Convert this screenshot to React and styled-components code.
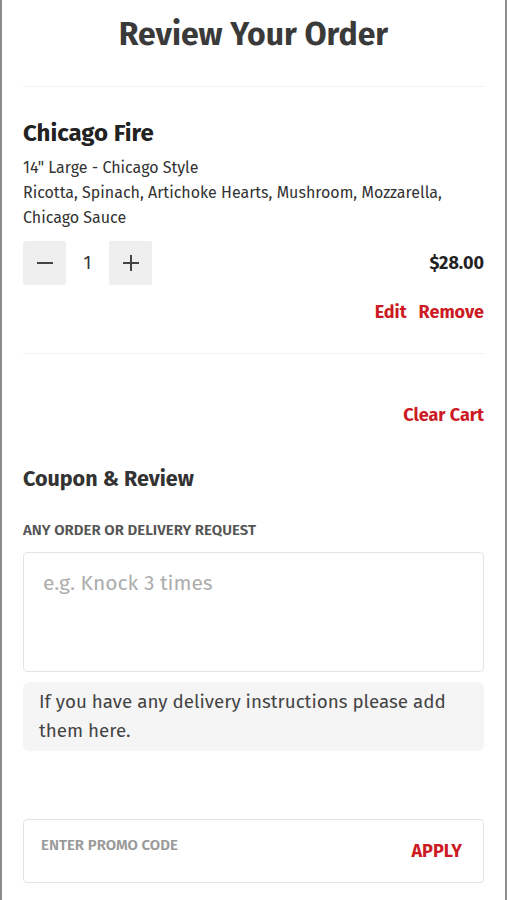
import React from "react";
import styled, { createGlobalStyle } from "styled-components";

const Global = createGlobalStyle`
  html, body { margin: 0; padding: 0; background: #fff; }
  body { font-family: "Fira Sans", "Open Sans", "Noto Sans", sans-serif; color: #333; }
  * { box-sizing: border-box; }
`;

const RED = "#cc1b24";

const Page = styled.div`
  min-height: 900px;
  border-left: 2px solid #8c8c8c;
  border-right: 2px solid #8c8c8c;
  padding: 0 21px 20px;
`;

const Title = styled.h1`
  margin: 0;
  padding-top: 14px;
  height: 87px;
  text-align: center;
  font-size: 32px;
  line-height: 40px;
  font-weight: 700;
  color: #3a3a3a;
  border-bottom: 1px solid #f2f2f2;
`;

const Item = styled.section`
  padding-top: 30px;
  height: 267px;
  border-bottom: 1px solid #f2f2f2;
`;

const ItemName = styled.h2`
  margin: 0 0 6px;
  font-size: 24px;
  line-height: 32px;
  font-weight: 700;
  color: #222;
`;

const Detail = styled.div`
  font-size: 16px;
  line-height: 25px;
  color: #333;
`;

const QtyRow = styled.div`
  display: flex;
  align-items: center;
  justify-content: space-between;
  margin-top: 11px;
`;

const Stepper = styled.div`
  display: flex;
  align-items: center;
`;

const StepBtn = styled.button`
  width: 43px;
  height: 44px;
  border: none;
  border-radius: 2px;
  background: #efefef;
  display: flex;
  align-items: center;
  justify-content: center;
  padding: 0;
  color: #444;
`;

const Qty = styled.span`
  width: 43px;
  text-align: center;
  font-size: 18px;
  color: #333;
`;

const Price = styled.span`
  font-size: 18px;
  font-weight: 700;
  color: #222;
`;

const Actions = styled.div`
  display: flex;
  justify-content: flex-end;
  gap: 12px;
  margin-top: 15px;
`;

const RedLink = styled.a`
  color: ${RED};
  font-weight: 700;
  font-size: 18px;
  text-decoration: none;
  line-height: 24px;
`;

const ClearRow = styled.div`
  display: flex;
  justify-content: flex-end;
  padding-top: 49px;
`;

const SectionTitle = styled.h3`
  margin: 38px 0 0;
  font-size: 21.5px;
  line-height: 28px;
  font-weight: 700;
  color: #333;
`;

const Label = styled.div`
  margin-top: 28px;
  font-size: 15px;
  line-height: 18px;
  font-weight: 600;
  color: #555;
  text-transform: uppercase;
`;

const TextArea = styled.textarea`
  display: block;
  width: 100%;
  height: 120px;
  margin-top: 13px;
  border: 1px solid #e4e4e4;
  border-radius: 4px;
  padding: 16px 19px;
  font-family: inherit;
  font-size: 21px;
  line-height: 28px;
  color: #333;
  resize: none;
  &::placeholder { color: #adadad; }
`;

const Info = styled.div`
  margin-top: 10px;
  background: #f5f5f5;
  border-radius: 6px;
  padding: 5px 16px 6px;
  font-size: 18.8px;
  line-height: 29px;
  color: #444;
`;

const Promo = styled.div`
  margin-top: 68px;
  height: 64px;
  border: 1px solid #e4e4e4;
  border-radius: 4px;
  display: flex;
  align-items: center;
  justify-content: space-between;
  padding: 0 21px 0 17px;
`;

const PromoInput = styled.input`
  border: none;
  outline: none;
  flex: 1;
  font-family: inherit;
  font-size: 15px;
  font-weight: 600;
  text-transform: uppercase;
  align-self: flex-start;
  margin-top: 16px;
  padding: 0;
  &::placeholder { color: #9a9a9a; }
`;

const Minus = () => (
  <svg width="18" height="18" viewBox="0 0 18 18" fill="none" stroke="currentColor" strokeWidth="2">
    <path d="M1 9h16" />
  </svg>
);
const Plus = () => (
  <svg width="18" height="18" viewBox="0 0 18 18" fill="none" stroke="currentColor" strokeWidth="2">
    <path d="M1 9h16M9 1v16" />
  </svg>
);

export default function App() {
  return (
    <>
      <Global />
      <Page>
        <Title>Review Your Order</Title>
        <Item>
          <ItemName>Chicago Fire</ItemName>
          <Detail>14" Large - Chicago Style</Detail>
          <Detail>Ricotta, Spinach, Artichoke Hearts, Mushroom, Mozzarella, Chicago Sauce</Detail>
          <QtyRow>
            <Stepper>
              <StepBtn aria-label="decrease"><Minus /></StepBtn>
              <Qty>1</Qty>
              <StepBtn aria-label="increase"><Plus /></StepBtn>
            </Stepper>
            <Price>$28.00</Price>
          </QtyRow>
          <Actions>
            <RedLink href="#">Edit</RedLink>
            <RedLink href="#">Remove</RedLink>
          </Actions>
        </Item>
        <ClearRow>
          <RedLink href="#">Clear Cart</RedLink>
        </ClearRow>
        <SectionTitle>Coupon &amp; Review</SectionTitle>
        <Label>Any order or delivery request</Label>
        <TextArea placeholder="e.g. Knock 3 times" />
        <Info>If you have any delivery instructions please add them here.</Info>
        <Promo>
          <PromoInput placeholder="ENTER PROMO CODE" />
          <RedLink href="#">APPLY</RedLink>
        </Promo>
      </Page>
    </>
  );
}
